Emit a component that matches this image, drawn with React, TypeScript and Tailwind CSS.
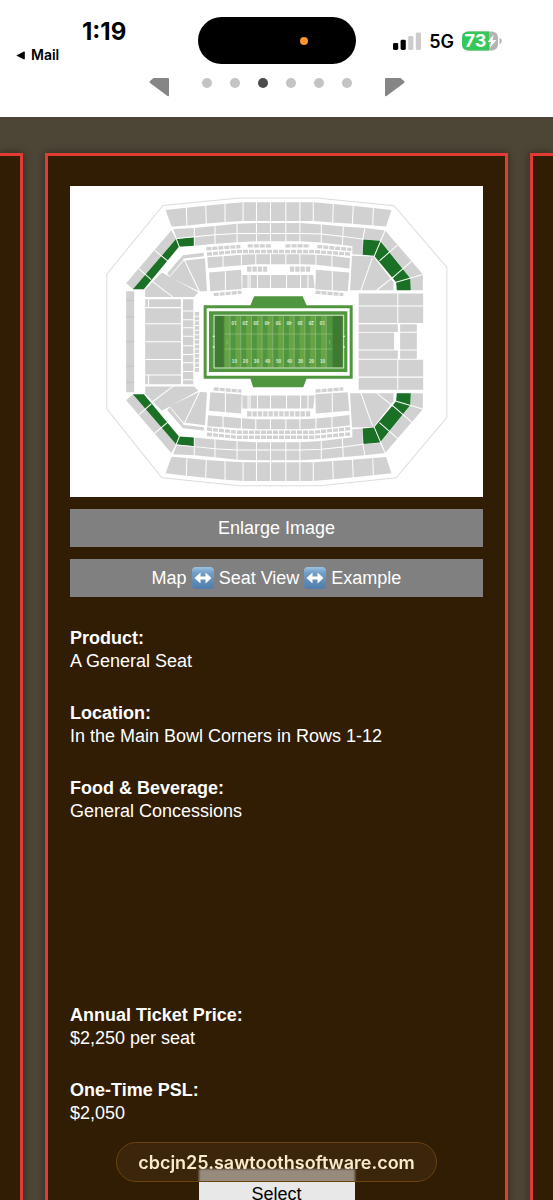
import React from "react";

const STRIPES = Array.from({ length: 20 }, (_, i) => 375 + i * 16);
const YARDS = ["10", "20", "30", "40", "50", "40", "30", "20", "10"];

function Bowl({ lower = false }: { lower?: boolean }) {
  return (
    <g>
      <g fill="#d1d1d1">
        <path d="M198 60 L260 53 318 47 376 41 430 37 H640 L700 42 760 48 820 54 874 60 858 109 820 106 757 101 700 97 640 93 H430 L376 96 320 100 262 106 216 110Z" />
        <path d="M221 117 L285 114 346 108 412 101 470 99 H600 L664 103 730 109 795 114 855 121 840 151 788 147 788 194 757 192 757 168 664 157 600 153 H470 L412 156 346 161 285 167 285 141 232 146Z" />
        <path d="M80 279 L215 121 230 147 100 296Z" />
        <path d="M855 121 L968 252 V300 H932 L930 264 842 152Z" />
        <path d="M203 249 L250 195 312 188 313 198 254 205 210 258Z" />
        <path d="M210 261 L252 212 316 204 322 302 300 304Z" />
        <path d="M187 247 L296 307 283 320 H137 V298Z" />
        <path d="M323 201 L370 198 425 194 468 192 H600 L648 194 696 197 750 204 748 235 696 229 648 224 600 222 H468 L425 225 370 230 325 234Z" />
        <path d="M328 247 L424 239 426 296 332 303Z" />
        <path d="M428 254 H640 L644 293 H428Z" />
        <path d="M648 239 L748 247 743 303 646 297Z" />
        <path d="M756 197 L820 199 880 276 V300 H750Z" />
      </g>
      <path
        fill="#1a7024"
        d="M100 297 H133 L238 170 284 167 V141 L230 146Z M790 148 L840 152 930 264 932 300 H890 L888 276 822 197 788 194Z"
      />
      <g fill="none" stroke="#fff" strokeWidth="3">
        <path d="M260 50 L262 110 M318 44 L320 104 M376 38 V100 M430 34 V97 M470 34 V97 M512 34 V97 M558 34 V97 M600 34 V97 M640 34 V97 M700 38 L698 100 M760 44 L757 104 M820 50 L818 108" />
        <path d="M284 110 V170 M346 105 V164 M412 98 V159 M470 96 V156 M512 96 V156 M558 96 V156 M600 96 V156 M664 100 V160 M730 106 L727 166 M795 112 L788 150" />
        <path d="M232 145 L285 140 346 134 412 130 H600 L664 132 730 139 790 147" />
        <path d="M165 180 L205 213 M118 235 L155 268 M229 144 L240 172" />
        <path d="M856 119 L822 199 M892 165 L838 212 M938 210 L876 264 M970 252 L888 276" />
        <path d="M252 205 L300 305 M160 275 L222 322 M817 203 L782 302 M880 260 L830 300" />
        <path d="M370 195 V233 M425 190 V228 M468 190 V226 M512 190 V226 M558 190 V226 M600 190 V226 M648 190 V228 M696 192 V233" />
        <path d="M377 240 V301 M445 252 V295 M451 252 V295 M473 252 V295 M512 252 V295 M560 252 V295 M602 252 V295 M624 252 V295 M697 240 V302" />
      </g>
      <g fill="none" stroke="#d1d1d1" strokeWidth="10" strokeDasharray="15 3">
        <path d="M342 313 L425 306 M647 306 L730 313" />
        {lower ? (
          <path d="M322 193 L412 183 H640 L752 194 M322 177 L412 168 H640 L752 178" />
        ) : (
          <path d="M320 176 L422 169 M322 192 L412 184 H640 L752 192 M444 167 H516 M557 167 H630 M652 169 L754 178" />
        )}
        <path strokeWidth="16" strokeDasharray="13 3" d={lower ? "M442 238 H633" : "M442 237 H502 M570 237 H632"} />
      </g>
    </g>
  );
}

function Field() {
  return (
    <g>
      <path fill="#509640" d="M312 345 H452 L463 318 H608 L620 345 H758 V565 H620 L610 590 H460 L452 565 H312Z" />
      <path fill="#fff" d="M321 354 H749 V556 H321Z" />
      <path fill="#509640" d="M328 363 H742 V545 H328Z" />
      <path fill="#3f7933" d="M345 377 H372 V531 H345Z M698 377 H727 V531 H698Z" />
      {STRIPES.map((x, i) => (
        <rect key={x} x={x} y="377" width="16" height="154" fill={i % 2 ? "#509640" : "#69a444"} />
      ))}
      <g fill="none" stroke="#a9cd93" strokeWidth="1.5">
        <path d="M375 431 H697 M375 476 H697 M382 448 V462 M689 448 V462" />
        {STRIPES.filter((_, i) => i % 2 === 1).map((x) => (
          <path key={x} d={`M${x} 377 V531`} />
        ))}
      </g>
      <path fill="none" stroke="#d6e9cc" strokeWidth="3" d="M343 375 H731 V533 H343Z" />
      <path stroke="#fff" strokeWidth="3" d="M339 438 H345 M339 470 H345 M729 438 H735 M729 470 H735" />
      <g fill="#dcebd2" fontFamily="Liberation Sans, sans-serif" fontWeight="700" fontSize="14" textAnchor="middle">
        {YARDS.map((yard, i) => (
          <text key={i} x={404 + i * 33} y="517">{yard}</text>
        ))}
        <g transform="rotate(180 535 454)">
          {YARDS.map((yard, i) => (
            <text key={i} x={403 + i * 33} y="517">{yard}</text>
          ))}
        </g>
      </g>
    </g>
  );
}

function StadiumMap() {
  return (
    <svg viewBox="-88 -12 1236 931" className="block w-full bg-white" role="img" aria-label="Stadium seating map">
      <path
        fill="none"
        stroke="#dcdcdc"
        strokeWidth="3"
        d="M22 252 L190 46 420 24 H650 L882 47 1040 232 V680 L888 861 660 885 H420 L187 861 22 655Z"
      />
      <Bowl />
      <g transform="translate(0 908) scale(1 -1)">
        <Bowl lower />
      </g>
      <g fill="#d1d1d1">
        <path d="M80 303 H104 V605 H80Z M137 327 H244 V581 H137Z M250 327 H281 V581 H250Z" />
        <path d="M776 310 H969 V398 H776Z M776 402 H893 V425 H776Z M776 427 H882 V477 H776Z M776 480 H893 V505 H776Z M900 402 H950 V505 H900Z M776 508 H969 V598 H776Z" />
      </g>
      <path fill="none" stroke="#d1d1d1" strokeWidth="13" strokeDasharray="11 3" d="M292 365 V545" />
      <g fill="none" stroke="#fff" strokeWidth="3">
        <path d="M137 352 H244 M137 400 H244 M137 454 H244 M137 507 H244 M137 554 H244 M147 327 V352 M147 554 V581" />
        <path d="M250 362 H281 M250 388 H281 M250 412 H281 M250 438 H281 M250 466 H281 M250 492 H281 M250 517 H281 M250 543 H281 M250 568 H281" />
        <path d="M776 347 H969 M776 560 H969 M893 310 V398 M893 508 V598 M900 426 H950 M900 479 H950" />
      </g>
      <path stroke="#bdbdbd" strokeWidth="2" d="M80 330 H104 M80 380 H104 M80 454 H104 M80 527 H104 M80 576 H104" />
      <Field />
    </svg>
  );
}

function SwapIcon() {
  return (
    <svg viewBox="0 0 22 22" className="h-[22px] w-[22px]" aria-hidden="true">
      <defs>
        <linearGradient id="swap" x1="0" y1="0" x2="0" y2="1">
          <stop offset="0" stopColor="#9cc3e2" />
          <stop offset="0.25" stopColor="#739fc8" />
          <stop offset="1" stopColor="#4e7dab" />
        </linearGradient>
      </defs>
      <rect width="22" height="22" rx="4" fill="url(#swap)" />
      <path d="M2.5 11 L8.5 5.5 V9.4 H13.5 V5.5 L19.5 11 L13.5 16.5 V12.6 H8.5 V16.5Z" fill="#fff" />
    </svg>
  );
}

function StatusBar() {
  return (
    <div className="grid h-[78px] grid-cols-[1fr_158px_1fr] bg-white font-['Inter',sans-serif] text-black">
      <div className="flex flex-col pl-4 pt-[18px]">
        <div className="pl-[66px] text-[24px] font-bold leading-7">1:19</div>
        <a href="#mail" className="flex items-center gap-[6px] text-[14px] font-semibold leading-[18px]">
          <svg viewBox="0 0 9 9" className="h-[9px] w-[9px]" aria-hidden="true">
            <path d="M0.3 4.5 L8 0.5 Q8.8 0.4 8.8 1.2 V7.8 Q8.8 8.6 8 8.5Z" />
          </svg>
          Mail
        </a>
      </div>
      <div className="mt-[17px] flex h-[47px] items-center justify-end rounded-full bg-black pr-12">
        <span className="h-2 w-2 rounded-full bg-[#ff9330]" />
      </div>
      <div className="flex h-[82px] items-center justify-end gap-2 pr-[51px]">
        <svg viewBox="0 0 28 18" className="h-[18px] w-7" aria-hidden="true">
          <rect x="0" y="11" width="5.2" height="7" rx="1.4" />
          <rect x="7.6" y="7.8" width="5.2" height="10.2" rx="1.4" />
          <rect x="15.2" y="4" width="5.2" height="14" rx="1.4" fill="#cccccc" />
          <rect x="22.8" y="0.5" width="5.2" height="17.5" rx="1.4" fill="#cccccc" />
        </svg>
        <span className="text-[18px] font-semibold">5G</span>
        <svg viewBox="0 0 40 20" className="h-5 w-10" aria-hidden="true">
          <defs>
            <clipPath id="cell">
              <rect x="0" y="0.5" width="36" height="19" rx="6" />
            </clipPath>
          </defs>
          <g clipPath="url(#cell)">
            <rect width="36" height="20" fill="#b3b3b3" />
            <rect width="27" height="20" fill="#34c759" />
          </g>
          <path d="M37.5 6.8 Q39.8 7.6 39.8 10 Q39.8 12.4 37.5 13.2Z" fill="#b3b3b3" />
          <text x="2.5" y="16.4" fill="#fff" fontSize="18" fontWeight="700" fontFamily="Inter, sans-serif">73</text>
          <path d="M31.8 3.6 L25.6 11 H29.2 L27.7 17 L34.4 9 H30.4Z" fill="#fff" />
        </svg>
      </div>
    </div>
  );
}

function Pager() {
  return (
    <nav className="flex h-[39px] justify-center bg-white" aria-label="Concepts">
      <button type="button" aria-label="Previous" className="flex h-5 w-5">
        <svg viewBox="0 0 20 20" className="h-5 w-5" aria-hidden="true">
          <path d="M4.5 0 H19 Q20 0 20 1 V17 Q20 19 18.5 18 L1 5 Q0 4 1 3Z" fill="#868686" />
        </svg>
      </button>
      <div className="flex h-[10px] gap-[18px] px-[33px]">
        {[0, 1, 2, 3, 4, 5].map((i) => (
          <button
            key={i}
            type="button"
            aria-label={`Concept ${i + 1}`}
            className={i === 2 ? "h-[10px] w-[10px] rounded-full bg-[#4c4c4c]" : "h-[10px] w-[10px] rounded-full bg-[#c4c4c4]"}
          />
        ))}
      </div>
      <button type="button" aria-label="Next" className="flex h-5 w-5">
        <svg viewBox="0 0 20 20" className="h-5 w-5" aria-hidden="true">
          <path d="M15.5 0 H1 Q0 0 0 1 V17 Q0 19 1.5 18 L19 5 Q20 4 19 3Z" fill="#868686" />
        </svg>
      </button>
    </nav>
  );
}

function Detail({ label, value }: { label: string; value: string }) {
  return (
    <div>
      <dt className="font-bold">{label}</dt>
      <dd>{value}</dd>
    </div>
  );
}

export default function App() {
  return (
    <div className="relative flex h-screen flex-col overflow-hidden bg-[#4d4536] font-['Liberation_Sans',Arial,sans-serif] text-[18px] leading-[23px] text-white">
      <header className="shrink-0">
        <StatusBar />
        <Pager />
      </header>
      <main className="flex grow gap-[22px] pt-9">
        <div className="w-[23px] shrink-0 border-r-3 border-t-3 border-[#e03c34] bg-[#301d03] shadow-[0_0_8px_rgba(0,0,0,0.4)]" />
        <article className="flex min-w-0 grow flex-col self-start border-3 border-[#e03c34] bg-[#301d03] px-[22px] pb-8 pt-[30px] shadow-[0_0_8px_rgba(0,0,0,0.4)]">
          <StadiumMap />
          <button type="button" className="mt-3 h-[38px] bg-[#808080]">
            Enlarge Image
          </button>
          <button type="button" className="mt-3 flex h-[38px] items-center justify-center gap-[5px] bg-[#808080]">
            Map <SwapIcon /> Seat View <SwapIcon /> Example
          </button>
          <dl className="mt-[30px] flex flex-col gap-[29px]">
            <Detail label="Product:" value="A General Seat" />
            <Detail label="Location:" value="In the Main Bowl Corners in Rows 1-12" />
            <Detail label="Food &amp; Beverage:" value="General Concessions" />
          </dl>
          <dl className="mt-[181px] flex flex-col gap-[29px]">
            <Detail label="Annual Ticket Price:" value="$2,250 per seat" />
            <Detail label="One-Time PSL:" value="$2,050" />
          </dl>
          <button type="button" className="mt-[44px] h-[50px] w-[156px] self-center bg-[#e8e8e8] text-black">
            Select
          </button>
        </article>
        <div className="w-[23px] shrink-0 border-l-3 border-t-3 border-[#e03c34] bg-[#301d03] shadow-[0_0_8px_rgba(0,0,0,0.4)]" />
      </main>
      <div className="absolute inset-x-0 bottom-[18px] flex justify-center">
        <a
          href="#address"
          className="flex h-10 items-center rounded-full border border-[#6b430f] bg-[rgba(70,46,20,0.5)] px-[21px] font-['Inter',sans-serif] text-[18px] font-semibold text-[#fbeacb] backdrop-blur-[1px]"
        >
          cbcjn25.sawtoothsoftware.com
        </a>
      </div>
    </div>
  );
}
